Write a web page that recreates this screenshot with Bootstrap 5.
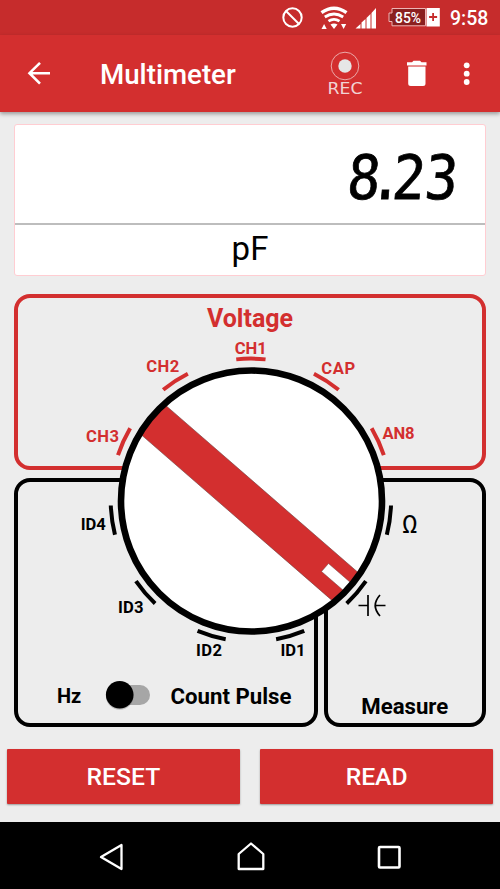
<!DOCTYPE html>
<html lang="en">
<head>
<meta charset="utf-8">
<meta name="viewport" content="width=device-width, initial-scale=1">
<title>Multimeter</title>
<link href="https://cdn.jsdelivr.net/npm/bootstrap@5.3.0/dist/css/bootstrap.min.css" rel="stylesheet">
<style>
  :root { --meter-red: #d32f2f; }
  body { font-family: Roboto, sans-serif; background: #ededed; color: #000; height: 889px; overflow: hidden; }
  svg { display: block; }
  .status-bar { height: 35px; background: #c62c2c; padding-right: 12px; }
  .clock { font-size: 19.5px; font-weight: 500; line-height: 35px; margin: 1px 0 0 10px; width: 38px; white-space: nowrap; }
  .toolbar { height: 77px; background: var(--meter-red); padding: 0 25px 0 26px; box-shadow: 0 2px 4px rgba(0,0,0,.35); position: relative; }
  .toolbar h1 { font-size: 27.7px; font-weight: 500; margin: 3px 0 0 48px; line-height: 1; }
  .readout { margin: 12px 14px 0; height: 152px; border: 1px solid #ffcdd2; border-radius: 3px; }
  .readout-value { height: 100px; padding-right: 14px; border-bottom: 2px solid #bdbdbd; }
  .readout-unit { font-size: 33px; line-height: 48px; }
  .selector { margin: 18px 14px 0; height: 433px; }
  .zone { border: 4px solid #000; border-radius: 16px; }
  .zone-voltage { height: 176px; border-color: var(--meter-red); color: var(--meter-red); }
  .zone-voltage h2 { font-size: 25px; font-weight: 700; line-height: 29px; padding-top: 6px; }
  .zone-row { height: 249px; margin-top: 7.5px; gap: 6px; }
  .zone-pulse { width: 303.5px; padding: 0 22px 12px 39px; }
  .zone-measure { padding-bottom: 2px; }
  .zone-label { font-size: 22.2px; font-weight: 700; line-height: 29px; white-space: nowrap; }
  .zone-label.hz { font-size: 20px; }
  .toggle { margin-left: 4px; margin-bottom: -1px; }
  .action { height: 55px; border-radius: 1px; background: var(--meter-red); color: #fff; font-size: 24.7px; font-weight: 500; box-shadow: 0 1px 2px rgba(0,0,0,.35); padding: 2px 0 0; }
  .actions { margin: 21.5px 7px 0; gap: 20.5px; }
  .nav-keys { height: 67px; margin-top: 18.5px; background: #000; padding: 3px 98px 0 99px; }
  .tick-label { font: 700 16.6px Roboto, sans-serif; }
</style>
</head>
<body>
<div class="status-bar d-flex align-items-center justify-content-end text-white">
  <svg width="160" height="35" viewBox="279.500 0 160 35" fill="none" stroke="#fff">
    <circle cx="292" cy="17.500" r="9.200" stroke-width="2"/><path d="M285.500 11l13 13" stroke-width="2"/>
    <path d="M321 12.700Q333.500 4 346 12.700" stroke-width="3.400"/>
    <path d="M324.300 17Q333.500 11 342.700 17M328 21.200Q333.500 17.500 339 21.200" stroke-width="2.800"/>
    <path d="M330 24.500Q333.500 22.300 337 24.500L333.500 29zM321 29l2.600-5 2.600 5zM340.500 24h5.200l-2.600 5z" fill="#fff" stroke="none"/>
    <path d="M355 28.500L360 24v4.500zM361 28.500V22.500l4-3.500v9.500zM366 28.500V18l4-4v14.500zM371 28.500V13l4.500-5v20.500z" fill="#fff" stroke="none"/>
    <path d="M391.500 8.500H425v17.300H391.500V21.500H388.500V13h3z" fill="#8b1f1f" stroke="#eeb5b5" stroke-width="1"/>
    <rect x="426" y="8" width="13.300" height="18.500" fill="#fff" stroke="none"/>
    <path d="M432.600 13v8M428.600 17h8" stroke="#c62c2c" stroke-width="1.800"/>
    <text x="394.500" y="22.500" fill="#fff" stroke="none" font-family="Roboto, sans-serif" font-size="14.500" font-weight="500" textLength="26" lengthAdjust="spacingAndGlyphs">85%</text>
  </svg>
  <span class="clock">9:58</span>
</div>

<header class="toolbar d-flex align-items-center text-white">
  <svg width="26" height="26" viewBox="26 62 26 26" fill="none" stroke="#fff" stroke-width="2.600"><path d="M50 74.200H29.500M40 63.800L29.500 74.200 40 84.600"/></svg>
  <h1>Multimeter</h1>
  <svg class="ms-auto" width="150" height="77" viewBox="325 35 150 77">
    <circle cx="345" cy="66" r="13.800" fill="none" stroke="#eba9a9"/><circle cx="345" cy="66" r="6.700" fill="#e6e6e6"/>
    <text x="327.500" y="93.500" fill="#f1d4d4" font-family="'DejaVu Sans', sans-serif" font-size="15" textLength="35" lengthAdjust="spacingAndGlyphs">REC</text>
    <path d="M407 62.200h5l1.500-1.500h6.500l1.500 1.500h5v3.300H407zM408.200 67h17.300v16.500q0 2.500-2.500 2.500H410.700q-2.500 0-2.500-2.500z" fill="#fff"/>
    <path d="M408.200 65.500h17.300v1.500h-17.300z" fill="#e98f8f"/>
    <g fill="#fff"><circle cx="466.700" cy="65.300" r="2.900"/><circle cx="466.700" cy="73.700" r="2.900"/><circle cx="466.700" cy="82" r="2.900"/></g>
  </svg>
</header>

<main>
  <section class="readout bg-white">
    <div class="readout-value d-flex justify-content-end">
      <svg width="136" height="97" viewBox="335 125 136 97">
        <g transform="translate(335 198.500) skewX(-5) scale(.9 1)">
          <text x="12 37 62 98" y="0" font-family="'DejaVu Sans Mono', monospace" font-size="61" stroke="#000" stroke-width=".8">8.23</text>
        </g>
      </svg>
    </div>
    <div class="readout-unit text-center">pF</div>
  </section>

  <section class="selector position-relative">
    <div class="zone zone-voltage text-center"><h2 class="m-0">Voltage</h2></div>
    <div class="zone-row d-flex">
      <div class="zone zone-pulse d-flex align-items-end justify-content-between">
        <span class="zone-label hz">Hz</span>
        <svg class="toggle" width="50" height="34" viewBox="103 678 50 34"><rect x="112" y="685" width="38" height="20" rx="10" fill="#a6a6a6"/><circle cx="119.700" cy="696" r="13.800" fill="#000" opacity=".2"/><circle cx="119.700" cy="694.800" r="13.800"/></svg>
        <span class="zone-label">Count Pulse</span>
      </div>
      <div class="zone zone-measure flex-fill d-flex align-items-end justify-content-center"><span class="zone-label">Measure</span></div>
    </div>

    <svg class="position-absolute top-0 start-0" width="472" height="433" viewBox="14 294.500 472 433">
      <defs><clipPath id="face"><circle cx="251.500" cy="501.500" r="129"/></clipPath></defs>
      <circle cx="251.500" cy="501.500" r="130.500" fill="#fff"/>
      <g clip-path="url(#face)">
        <path d="M130 374.900L380 592 355 620.900 105 403.800z" fill="#d32f2f" stroke="#6b4040" stroke-width=".6"/>
        <path d="M328.500 564L362 593 355 601 321.500 572z" fill="#fff" stroke="#6b4040" stroke-width=".5"/>
      </g>
      <circle cx="251.500" cy="501.500" r="130.500" fill="none" stroke="#000" stroke-width="6.600"/>
      <g id="ticks" fill="none" stroke-width="4"></g>
      <g class="tick-label" fill="#d32f2f">
        <text x="234.800" y="354" textLength="32">CH1</text>
        <text x="146.300" y="372" textLength="33">CH2</text>
        <text x="86" y="442" textLength="33">CH3</text>
        <text x="321.300" y="374.300" textLength="34">CAP</text>
        <text x="382.500" y="439" textLength="32">AN8</text>
      </g>
      <g class="tick-label">
        <text x="80.800" y="530.500" textLength="25">ID4</text>
        <text x="118" y="613.300" textLength="25.500">ID3</text>
        <text x="196" y="656.700" textLength="26">ID2</text>
        <text x="280.500" y="656.700" textLength="25">ID1</text>
      </g>
      <text x="409.700" y="533.500" text-anchor="middle" font-family="'DejaVu Sans Mono', monospace" font-size="25">Ω</text>
      <path d="M358.500 606H368M368 595.500V616.500M380 595.500Q370.500 606 380 616.500M375.500 606H385.500" fill="none" stroke="#000" stroke-width="1.700"/>
    </svg>
  </section>

  <div class="actions d-flex">
    <button class="btn action flex-fill w-50">RESET</button>
    <button class="btn action flex-fill w-50">READ</button>
  </div>
</main>

<nav class="nav-keys d-flex align-items-center justify-content-between">
  <svg width="26" height="30" viewBox="99 843 26 30" fill="none" stroke="#fff" stroke-width="2.300" stroke-linejoin="round"><path d="M121.500 846V870L101 858z"/></svg>
  <svg width="30" height="30" viewBox="235 843 30 30" fill="none" stroke="#fff" stroke-width="2.300" stroke-linejoin="round"><path d="M237.700 870V855L250 844.500 262.300 855V870z"/></svg>
  <svg width="26" height="30" viewBox="376 843 26 30" fill="none" stroke="#fff" stroke-width="2.600"><rect x="379" y="848" width="20.500" height="20.500" rx="1"/></svg>
</nav>

<script src="https://cdn.jsdelivr.net/npm/bootstrap@5.3.0/dist/js/bootstrap.bundle.min.js"></script>
<script>
  // Eleven evenly spaced detents around the dial; the upper five belong to the voltage zone.
  const ticks = document.getElementById('ticks');
  const cx = 250.9, cy = 500.6, rx = 140.2, ry = 141.5, half = 6;
  const at = deg => {
    const a = deg * Math.PI / 180;
    return (cx + rx * Math.sin(a)).toFixed(2) + ' ' + (cy - ry * Math.cos(a)).toFixed(2);
  };
  for (let i = 0; i < 11; i++) {
    const deg = i * 360 / 11;
    const p = document.createElementNS('http://www.w3.org/2000/svg', 'path');
    p.setAttribute('d', `M${at(deg - half)}A${rx} ${ry} 0 0 1 ${at(deg + half)}`);
    p.setAttribute('stroke', i < 3 || i > 8 ? '#d32f2f' : '#000');
    ticks.appendChild(p);
  }
</script>
</body>
</html>
